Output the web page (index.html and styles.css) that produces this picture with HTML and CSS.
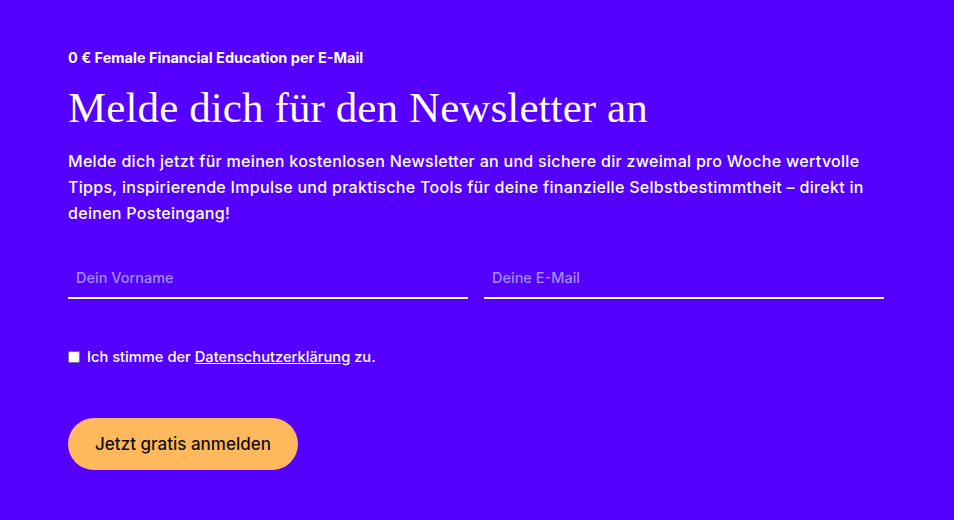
FILE: index.html
```html
<!DOCTYPE html>
<html lang="de">
<head>
<meta charset="utf-8">
<link rel="stylesheet" href="styles.css">
</head>
<body>
<section class="newsletter">
  <p class="eyebrow">0 € Female Financial Education per E-Mail</p>
  <h1 class="title">Melde dich für den Newsletter an</h1>
  <p class="lead">Melde dich jetzt für meinen kostenlosen Newsletter an und sichere dir zweimal pro Woche wertvolle Tipps, inspirierende Impulse und praktische Tools für deine finanzielle Selbstbestimmtheit – direkt in deinen Posteingang!</p>
  <form class="form">
    <div class="fields">
      <input class="field" type="text" placeholder="Dein Vorname">
      <input class="field" type="email" placeholder="Deine E-Mail">
    </div>
    <label class="consent"><input class="check" type="checkbox"> Ich stimme der <a href="#" class="link">Datenschutzerklärung</a> zu.</label>
    <button class="submit" type="button">Jetzt gratis anmelden</button>
  </form>
</section>
</body>
</html>
```

FILE: styles.css
```css
html, body {
  margin: 0;
  padding: 0;
  background: #5500ff;
}
body {
  font-family: Inter, "Noto Sans", sans-serif;
  color: #ffffff;
}
.newsletter {
  padding: 48px 70px 40px 68px;
}
.eyebrow {
  margin: 0;
  font-size: 14.5px;
  font-weight: 700;
  line-height: 20px;
  letter-spacing: 0;
}
.title {
  margin: 14px 0 0;
  font-family: "Liberation Serif", "DejaVu Serif", serif;
  font-weight: 400;
  font-size: 43px;
  line-height: 52px;
  letter-spacing: 0.1px;
}
.lead {
  margin: 14px 0 0;
  font-size: 16px;
  font-weight: 500;
  line-height: 26px;
  letter-spacing: 0.3px;
}
.form {
  margin-top: 31px;
}
.fields {
  display: flex;
  gap: 16px;
}
.field {
  flex: 1;
  min-width: 0;
  box-sizing: border-box;
  height: 42px;
  padding: 0 8px;
  background: transparent;
  border: none;
  border-bottom: 2px solid #ffffff;
  color: #ffffff;
  font-family: Inter, "Noto Sans", sans-serif;
  font-size: 14.5px;
  font-weight: 500;
  outline: none;
}
.field::placeholder {
  color: #a190ff;
}
.consent {
  display: flex;
  align-items: center;
  margin-top: 48px;
  font-size: 14.7px;
  font-weight: 500;
  line-height: 20px;
  white-space: pre;
}
.check {
  margin: 0 3px 0 0;
  width: 12px;
  height: 12px;
}
.link {
  color: #ffffff;
  text-decoration: underline;
}
.submit {
  display: block;
  margin-top: 51px;
  width: 230px;
  height: 52px;
  border: none;
  border-radius: 26px;
  background: #ffb85c;
  color: #111111;
  font-family: Inter, "Noto Sans", sans-serif;
  font-size: 17px;
  font-weight: 500;
}
```
